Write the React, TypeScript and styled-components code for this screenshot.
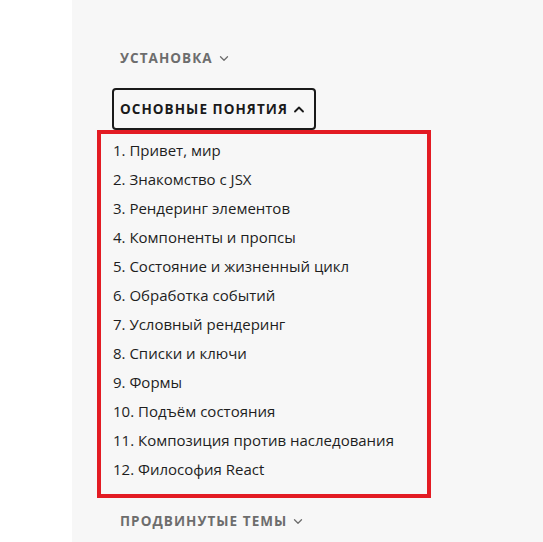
import React from "react";
import styled, { createGlobalStyle } from "styled-components";

const GlobalStyle = createGlobalStyle`
  html, body {
    margin: 0;
    padding: 0;
    background: #ffffff;
  }
  body {
    font-family: "Open Sans", "Noto Sans", "DejaVu Sans", sans-serif;
  }
`;

const sections = [
  { title: "Установка", open: false },
  { title: "Основные понятия", open: true },
  { title: "Продвинутые темы", open: false },
];

const lessons = [
  "1. Привет, мир",
  "2. Знакомство с JSX",
  "3. Рендеринг элементов",
  "4. Компоненты и пропсы",
  "5. Состояние и жизненный цикл",
  "6. Обработка событий",
  "7. Условный рендеринг",
  "8. Списки и ключи",
  "9. Формы",
  "10. Подъём состояния",
  "11. Композиция против наследования",
  "12. Философия React",
];

const Chevron = ({ up }: { up?: boolean }) => (
  <svg width="10" height="7" viewBox="0 0 10 7" fill="none">
    <path
      d={up ? "M1 5.5 L5 1.5 L9 5.5" : "M1.5 1.8 L5 5.2 L8.5 1.8"}
      stroke="currentColor"
      strokeWidth={up ? 1.8 : 1.3}
      strokeLinecap="round"
      strokeLinejoin="round"
    />
  </svg>
);

const App = () => {
  return (
    <Page>
      <GlobalStyle />
      <Gutter />
      <Sidebar>
        {sections.map((s) => (
          <Section key={s.title}>
            <Heading active={s.open ? "true" : "false"}>
              <span>{s.title}</span>
              <Chevron up={s.open} />
            </Heading>
            {s.open && (
              <Lessons>
                {lessons.map((l) => (
                  <Lesson key={l}>{l}</Lesson>
                ))}
              </Lessons>
            )}
          </Section>
        ))}
      </Sidebar>
    </Page>
  );
};

export default App;

const Page = styled.div`
  display: flex;
  width: 543px;
  height: 542px;
  overflow: hidden;
`;

const Gutter = styled.div`
  width: 72px;
  flex-shrink: 0;
  background: #ffffff;
`;

const Sidebar = styled.nav`
  flex: 1;
  background: #f7f7f7;
  padding: 37px 0 0 40px;
  display: flex;
  flex-direction: column;
  gap: 9px;
`;

const Section = styled.div`
  display: flex;
  flex-direction: column;
`;

const Heading = styled.div<{ active: string }>`
  align-self: flex-start;
  box-sizing: border-box;
  height: 42px;
  display: flex;
  align-items: center;
  gap: 6px;
  padding: 0 10px 0 6px;
  border: 2px solid
    ${(p) => (p.active === "true" ? "#1a1a1a" : "transparent")};
  border-radius: 4px;
  color: ${(p) => (p.active === "true" ? "#1a1a1a" : "#6d6d6d")};
  font-size: 13.5px;
  font-weight: 700;
  letter-spacing: 1.05px;
  text-transform: uppercase;
  white-space: nowrap;
`;

const Lessons = styled.ul`
  list-style: none;
  box-sizing: border-box;
  width: 334px;
  margin: 0 0 -7px -15px;
  padding: 2px 0 10px 12px;
  border: 4px solid #e31b23;
`;

const Lesson = styled.li`
  font-size: 15px;
  line-height: 29px;
  color: #1e1e1e;
  white-space: nowrap;
`;
